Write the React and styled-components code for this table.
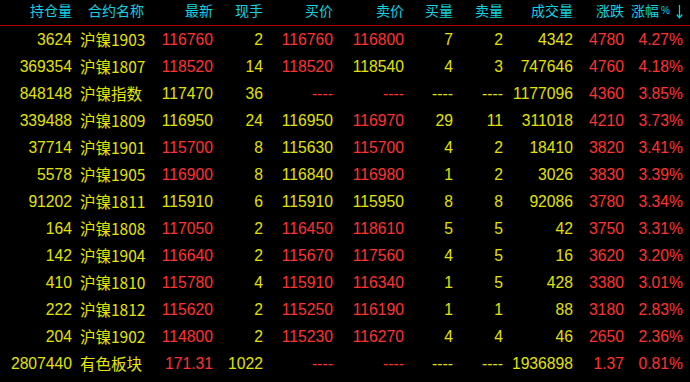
import React from "react";
import styled, { createGlobalStyle } from "styled-components";

const Global = createGlobalStyle`
  html, body { margin: 0; padding: 0; background: #000; }
  body { width: 690px; height: 382px; overflow: hidden; }
`;

const COLS = "76px 79px 62px 50px 70px 71px 49px 50px 70px 51px 59px";

const Board = styled.div`
  width: 690px;
  height: 382px;
  background: #000;
  display: flex;
  flex-direction: column;
`;

const HeaderRow = styled.div`
  display: grid;
  grid-template-columns: ${COLS};
  height: 25px;
  border-bottom: 1px solid #b40000;
  box-sizing: content-box;
`;

const HeadCell = styled.div`
  font-family: "Noto Sans CJK SC", sans-serif;
  font-size: 14px;
  line-height: 20px;
  color: #12d2e2;
  padding-right: ${(p) => (p.$center ? "0" : "4px")};
  padding-left: ${(p) => (p.$center ? "12px" : "0")};
  white-space: nowrap;
  display: flex;
  justify-content: ${(p) => (p.$center ? "flex-start" : "flex-end")};
  align-items: center;
  height: 20px;
`;

const Pct = styled.span`
  font-family: "Liberation Sans", Arial, sans-serif;
  font-size: 10px;
  line-height: 10px;
  margin-left: 2px;
  margin-top: 2px;
`;

const ArrowSvg = styled.svg`
  width: 7px;
  height: 15px;
  margin-left: 6px;
  margin-top: 3px;
  flex: none;
`;

const Body = styled.div`
  display: flex;
  flex-direction: column;
`;

const Row = styled.div`
  display: grid;
  grid-template-columns: ${COLS};
  height: 27px;
`;

const Num = styled.div`
  font-family: "Liberation Sans", Arial, sans-serif;
  font-size: 15.7px;
  line-height: 27px;
  text-align: right;
  padding-right: 4px;
  white-space: nowrap;
  color: ${(p) => (p.$c === "r" ? "#ff3232" : "#e2e200")};
`;

const Name = styled.div`
  font-family: "Noto Sans CJK SC", sans-serif;
  font-size: 15.5px;
  line-height: 27px;
  padding-left: 4px;
  white-space: nowrap;
  color: #e6e600;
`;

const headers = ["持仓量", "合约名称", "最新", "现手", "买价", "卖价", "买量", "卖量", "成交量", "涨跌"];

// [oi, name, last, vol, bid, ask, bidv, askv, total, chg, pct, colours of last/bid/ask]
const rows = [
  ["3624", "沪镍1903", "116760", "2", "116760", "116800", "7", "2", "4342", "4780", "4.27%", "rrr"],
  ["369354", "沪镍1807", "118520", "14", "118520", "118540", "4", "3", "747646", "4760", "4.18%", "rry"],
  ["848148", "沪镍指数", "117470", "36", "----", "----", "----", "----", "1177096", "4360", "3.85%", "yrr"],
  ["339488", "沪镍1809", "116950", "24", "116950", "116970", "29", "11", "311018", "4210", "3.73%", "yyr"],
  ["37714", "沪镍1901", "115700", "8", "115630", "115700", "4", "2", "18410", "3820", "3.41%", "ryr"],
  ["5578", "沪镍1905", "116900", "8", "116840", "116980", "1", "2", "3026", "3830", "3.39%", "ryr"],
  ["91202", "沪镍1811", "115910", "6", "115910", "115950", "8", "8", "92086", "3780", "3.34%", "yyy"],
  ["164", "沪镍1808", "117050", "2", "116450", "118610", "5", "5", "42", "3750", "3.31%", "rrr"],
  ["142", "沪镍1904", "116640", "2", "115670", "117560", "4", "5", "16", "3620", "3.20%", "rrr"],
  ["410", "沪镍1810", "115780", "4", "115910", "116340", "1", "5", "428", "3380", "3.01%", "rrr"],
  ["222", "沪镍1812", "115620", "2", "115250", "116190", "1", "1", "88", "3180", "2.83%", "rrr"],
  ["204", "沪镍1902", "114800", "2", "115230", "116270", "4", "4", "46", "2650", "2.36%", "rrr"],
  ["2807440", "有色板块", "171.31", "1022", "----", "----", "----", "----", "1936898", "1.37", "0.81%", "rrr"],
];

export default function App() {
  return (
    <Board>
      <Global />
      <HeaderRow>
        {headers.map((h, i) => (
          <HeadCell key={h} $center={i === 1}>
            {h}
          </HeadCell>
        ))}
        <HeadCell>
          涨幅<Pct>%</Pct>
          <ArrowSvg viewBox="0 0 7 15">
            <path d="M3.5 1 V13.5 M0.8 10.5 L3.5 13.8 L6.2 10.5" stroke="#12d2e2" strokeWidth="1.2" fill="none" />
          </ArrowSvg>
        </HeadCell>
      </HeaderRow>
      <Body>
        {rows.map((r) => (
          <Row key={r[1]}>
            <Num>{r[0]}</Num>
            <Name>{r[1]}</Name>
            <Num $c={r[11][0]}>{r[2]}</Num>
            <Num>{r[3]}</Num>
            <Num $c={r[11][1]}>{r[4]}</Num>
            <Num $c={r[11][2]}>{r[5]}</Num>
            <Num>{r[6]}</Num>
            <Num>{r[7]}</Num>
            <Num>{r[8]}</Num>
            <Num $c="r">{r[9]}</Num>
            <Num $c="r">{r[10]}</Num>
          </Row>
        ))}
      </Body>
    </Board>
  );
}
